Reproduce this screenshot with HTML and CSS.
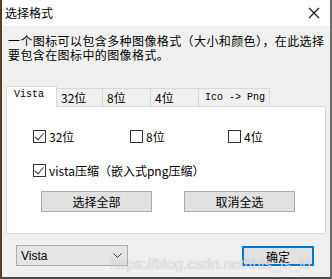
FILE: index.html
```html
<!DOCTYPE html>
<html lang="zh">
<head>
    <meta charset="UTF-8">
    <title>选择格式</title>
    <link rel="stylesheet" href="styles.css">
</head>
<body>

    <div class="window">
        <div class="titlebar">
            <span class="title">选择格式</span>
            <svg class="close" width="12" height="12" viewBox="0 0 12 12">
                <path d="M1 1 L11 11 M11 1 L1 11" stroke="#111" stroke-width="1.1" fill="none"/>
            </svg>
        </div>

        <div class="content">
            <p class="desc">一个图标可以包含多种图像格式（大小和颜色），在此选择<br>要包含在图标中的图像格式。</p>

            <div class="tabs">
                <div class="tab active mono">Vista</div>
                <div class="tab w32">32位</div>
                <div class="tab w8">8位</div>
                <div class="tab w4">4位</div>
                <div class="tab wico mono">Ico -&gt; Png</div>
            </div>

            <div class="panel">
                <div class="checks">
                    <label class="check"><span class="box checked"></span>32位</label>
                    <label class="check"><span class="box"></span>8位</label>
                    <label class="check"><span class="box"></span>4位</label>
                </div>
                <label class="check wide"><span class="box checked"></span>vista压缩（嵌入式png压缩）</label>
                <div class="buttons">
                    <button class="btn">选择全部</button>
                    <button class="btn">取消全选</button>
                </div>
            </div>

            <div class="footer">
                <div class="combo">
                    <span>Vista</span>
                    <svg width="9" height="6" viewBox="0 0 9 6">
                        <path d="M0.5 0.5 L4.5 4.5 L8.5 0.5" stroke="#333" fill="none"/>
                    </svg>
                </div>
                <button class="btn ok">确定</button>
            </div>

            <div class="watermark">https://blog.csdn.net/this_is_id</div>
        </div>
    </div>

</body>
</html>
```

FILE: styles.css
```css
* {
    box-sizing: border-box;
}

body {
    margin: 0;
    font-family: "Noto Sans CJK SC", "Liberation Sans", sans-serif;
    font-size: 12px;
    color: #000;
}

.window {
    width: 332px;
    height: 279px;
    display: flex;
    flex-direction: column;
    border-left: 2px solid #5b3c27;
    border-right: 2px solid #6c6c6c;
    border-bottom: 2px solid #4a4a4a;
    background-color: #f0f0f0;
}

.titlebar {
    height: 26px;
    background-color: #fff;
    display: flex;
    align-items: center;
    justify-content: space-between;
    padding: 0 10px 0 3px;
}

.title {
    font-size: 12px;
    line-height: 12px;
}

.content {
    position: relative;
    flex: 1;
    padding: 8px 4px 0 4px;
}

.desc {
    margin: 0 0 0 2px;
    line-height: 14px;
    height: 28px;
    white-space: nowrap;
    letter-spacing: 0.4px;
}

.tabs {
    display: flex;
    align-items: flex-end;
    margin-top: 24px;
    height: 20px;
}

.tab {
    height: 18px;
    border: 1px solid #d9d9d9;
    border-bottom: none;
    border-left: none;
    background-color: #f0f0f0;
    line-height: 18px;
    padding-left: 4px;
    white-space: nowrap;
}

.tab.active {
    height: 21px;
    width: 51px;
    background-color: #fff;
    border-left: 1px solid #d9d9d9;
    margin-bottom: -1px;
    position: relative;
    z-index: 1;
    padding-left: 7px;
    line-height: 15px;
}

.mono {
    font-family: "Liberation Mono", monospace;
    font-size: 10px;
}

.w32 { width: 46px; }
.w8 { width: 48px; }
.w4 { width: 48px; }
.wico { width: 71px; padding-left: 6px; }

.panel {
    width: 320px;
    height: 128px;
    background-color: #fff;
    border: 1px solid #d9d9d9;
    padding: 23px 0 0 26px;
}

.checks {
    display: grid;
    grid-template-columns: 97px 98px 80px;
}

.check {
    display: flex;
    align-items: center;
    gap: 3px;
    height: 13px;
    line-height: 13px;
}

.wide {
    margin-top: 21px;
}

.box {
    width: 13px;
    height: 13px;
    border: 1px solid #333;
    background-color: #fff;
    position: relative;
}

.box.checked::after {
    content: "";
    position: absolute;
    left: 2px;
    top: 0px;
    width: 4px;
    height: 8px;
    border-right: 1px solid #333;
    border-bottom: 1px solid #333;
    transform: rotate(40deg);
    transform-origin: 60% 60%;
}

.buttons {
    display: flex;
    gap: 32px;
    margin: 14px 0 0 8px;
}

.btn {
    width: 111px;
    height: 21px;
    background-color: #e1e1e1;
    border: 1px solid #adadad;
    font-family: "Noto Sans CJK SC", sans-serif;
    font-size: 12px;
    padding: 0;
    color: #000;
}

.footer {
    display: flex;
    justify-content: space-between;
    align-items: flex-start;
    margin-top: 11px;
    padding: 0 12px 0 10px;
}

.combo {
    width: 112px;
    height: 21px;
    border: 1px solid #adadad;
    background-color: #e5e5e5;
    display: flex;
    align-items: center;
    justify-content: space-between;
    padding: 0 5px 0 4px;
    font-family: "Liberation Sans", sans-serif;
    font-size: 12px;
}

.btn.ok {
    width: 72px;
    height: 20px;
    margin-top: 1px;
    border: 2px solid #0078d7;
}

.watermark {
    position: absolute;
    left: 108px;
    bottom: 5px;
    font-family: "Liberation Sans", sans-serif;
    font-size: 15px;
    color: rgba(255, 255, 255, 0.75);
    text-shadow: 0 0 1px rgba(0, 0, 0, 0.35);
    white-space: nowrap;
}
```
